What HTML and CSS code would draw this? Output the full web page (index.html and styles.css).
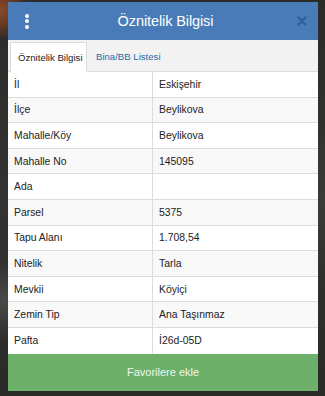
FILE: index.html
```html
<!DOCTYPE html>
<html>
<head>
<meta charset="utf-8">
<link rel="stylesheet" href="styles.css">
</head>
<body>
<div class="bg">
  <div class="modal">
    <div class="header">
      <span class="kebab"><i></i><i></i><i></i></span>
      <span class="title">Öznitelik Bilgisi</span>
      <svg class="close" width="10" height="10" viewBox="0 0 10 10"><path d="M1.5 1.5L8.5 8.5M8.5 1.5L1.5 8.5" stroke="#30609a" stroke-width="2.4" stroke-linecap="round"/></svg>
    </div>
    <div class="tabs">
      <div class="tab active">Öznitelik Bilgisi</div>
      <div class="tab link">Bina/BB Listesi</div>
    </div>
    <div class="table">
      <div class="row"><div class="k">İl</div><div class="v">Eskişehir</div></div>
      <div class="row"><div class="k">İlçe</div><div class="v">Beylikova</div></div>
      <div class="row"><div class="k">Mahalle/Köy</div><div class="v">Beylikova</div></div>
      <div class="row"><div class="k">Mahalle No</div><div class="v">145095</div></div>
      <div class="row"><div class="k">Ada</div><div class="v"></div></div>
      <div class="row"><div class="k">Parsel</div><div class="v">5375</div></div>
      <div class="row"><div class="k">Tapu Alanı</div><div class="v">1.708,54</div></div>
      <div class="row"><div class="k">Nitelik</div><div class="v">Tarla</div></div>
      <div class="row"><div class="k">Mevkii</div><div class="v">Köyiçi</div></div>
      <div class="row"><div class="k">Zemin Tip</div><div class="v">Ana Taşınmaz</div></div>
      <div class="row"><div class="k">Pafta</div><div class="v">İ26d-05D</div></div>
    </div>
    <div class="fav">Favorilere ekle</div>
  </div>
</div>
</body>
</html>
```
FILE: styles.css
```css
* { box-sizing: border-box; }
html, body { margin: 0; padding: 0; }
body {
  width: 325px;
  height: 396px;
  overflow: hidden;
  font-family: "Liberation Sans", Arial, sans-serif;
}
.bg {
  width: 325px;
  height: 396px;
  padding: 2px 7px 0 8px;
  background:
    radial-gradient(circle at 0 10px, #8a4a2a 0, #6a3a22 14px, rgba(40,40,40,0) 30px),
    radial-gradient(circle at 320px 200px, #3a3a38 0, rgba(30,30,30,0) 80px),
    radial-gradient(circle at 4px 300px, #4a4a48 0, rgba(30,30,30,0) 40px),
    linear-gradient(180deg, #2b2b2a 0%, #333331 50%, #2a2a29 100%);
}
.modal {
  width: 310px;
  height: 389px;
  display: flex;
  flex-direction: column;
  background: #fff;
}
.header {
  height: 38px;
  background: #4a7bb9;
  display: flex;
  align-items: center;
  padding: 0 11px 0 16px;
  color: #fff;
}
.kebab {
  width: 6px;
  display: flex;
  flex-direction: column;
  gap: 1.5px;
  align-items: center;
}
.kebab i {
  width: 4px;
  height: 4px;
  border-radius: 50%;
  background: #fff;
}
.title {
  flex: 1;
  text-align: center;
  font-size: 14.5px;
  letter-spacing: -0.1px;
  padding-left: 4px;
}
.close { display: block; }
.tabs {
  height: 32px;
  background: #f2f2f2;
  display: flex;
  align-items: flex-end;
  padding-left: 2px;
  border-bottom: 1px solid #dddddd;
}
.tab {
  height: 29px;
  font-size: 9.6px;
  white-space: nowrap;
  display: flex;
  align-items: center;
  padding: 0 7px;
}
.tab.active {
  background: #fff;
  color: #222;
  border: 1px solid #dddddd;
  border-bottom: none;
  width: 77px;
  margin-bottom: -1px;
  height: 30px;
}
.tab.link {
  color: #2a6aa8;
  padding-left: 9px;
}
.table {
  display: flex;
  flex-direction: column;
}
.row {
  height: 25.6px;
  display: flex;
  border-bottom: 1px solid #dcdcdc;
  font-size: 10.4px;
  color: #222;
}
.row:last-child { border-bottom: none; }
.row:nth-child(even) { background: #f8f8f8; }
.k {
  width: 145px;
  border-right: 1px solid #dcdcdc;
  padding-left: 6px;
  display: flex;
  align-items: center;
}
.v {
  flex: 1;
  padding-left: 6px;
  display: flex;
  align-items: center;
}
.fav {
  flex: 1;
  background: #6cb06a;
  color: #eef7ec;
  font-size: 11px;
  display: flex;
  align-items: center;
  justify-content: center;
}
```
